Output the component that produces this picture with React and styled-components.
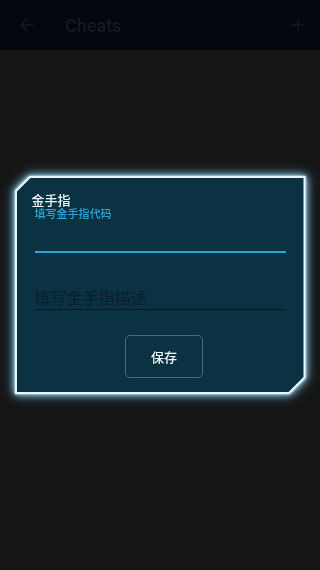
import React from 'react';
import styled, { createGlobalStyle } from 'styled-components';
import { ArrowLeft, Plus } from 'lucide-react';

const GlobalStyle = createGlobalStyle`
  html, body {
    margin: 0;
    padding: 0;
    background: #151515;
    font-family: Roboto, "Noto Sans CJK SC", sans-serif;
  }
`;

const Page = styled.div`
  display: flex;
  flex-direction: column;
  min-height: 100vh;
  background: #151515;
`;

const TopBar = styled.header`
  display: flex;
  align-items: center;
  height: 50px;
  padding: 0 12px 0 17px;
  background: #02060e;
  color: #16191e;
`;

const BarTitle = styled.h1`
  flex: 1;
  margin: 0 0 0 28px;
  font-size: 18px;
  font-weight: 500;
  color: #16191e;
`;

const Overlay = styled.div`
  position: fixed;
  inset: 0;
  display: flex;
  align-items: center;
  justify-content: center;
`;

const Glow = styled.div`
  filter: drop-shadow(0 0 1px #d8f4ff) drop-shadow(0 0 3px rgba(160, 220, 245, 0.9))
    drop-shadow(0 0 6px rgba(110, 190, 225, 0.7));
`;

const FrameBorder = styled.div`
  width: 287px;
  padding: 2px;
  background: #e4f7ff;
  clip-path: polygon(15px 0, 100% 0, 100% calc(100% - 16px), calc(100% - 16px) 100%, 0 100%, 0 15px);
`;

const Panel = styled.div`
  display: flex;
  flex-direction: column;
  padding: 15px 0 14px;
  background: #0a3243;
  clip-path: polygon(14px 0, 100% 0, 100% calc(100% - 15px), calc(100% - 15px) 100%, 0 100%, 0 14px);
`;

const Label = styled.div`
  margin-left: 15px;
  font-size: 13px;
  font-weight: 500;
  line-height: 15px;
  color: #f2f6f8;
`;

const Hint = styled.div`
  margin-left: 18px;
  font-size: 11px;
  font-weight: 500;
  line-height: 13px;
  color: #2ea7d8;
`;

const Field = styled.input`
  display: block;
  margin: ${({ $top }) => $top}px 18px 0;
  height: ${({ $h }) => $h}px;
  padding: 0;
  border: 0;
  border-bottom: ${({ $line }) => $line};
  background: transparent;
  outline: none;
  font-family: Roboto, "Noto Sans CJK SC", sans-serif;
  font-size: 16px;
  color: #fff;

  &::placeholder {
    color: #0a1f29;
  }
`;

const Actions = styled.div`
  display: flex;
  justify-content: center;
  margin-top: 25px;
  padding-left: 8px;
`;

const SaveButton = styled.button`
  width: 78px;
  height: 43px;
  border: 1px solid #4a6c79;
  border-radius: 5px;
  background: transparent;
  font-family: Roboto, "Noto Sans CJK SC", sans-serif;
  font-size: 13px;
  font-weight: 500;
  color: #f4f8fa;
`;

export default function App() {
  return (
    <Page>
      <GlobalStyle />
      <TopBar>
        <ArrowLeft size={20} strokeWidth={2} />
        <BarTitle>Cheats</BarTitle>
        <Plus size={20} strokeWidth={1.6} />
      </TopBar>
      <Overlay>
        <Glow>
          <FrameBorder>
            <Panel>
              <Label>金手指</Label>
              <Hint>填写金手指代码</Hint>
              <Field $top={0} $h={30} $line="2px solid #2aa6d8" />
              <Field $top={34} $h={22} $line="1px solid #051a23" placeholder="填写金手指描述" />
              <Actions>
                <SaveButton>保存</SaveButton>
              </Actions>
            </Panel>
          </FrameBorder>
        </Glow>
      </Overlay>
    </Page>
  );
}
